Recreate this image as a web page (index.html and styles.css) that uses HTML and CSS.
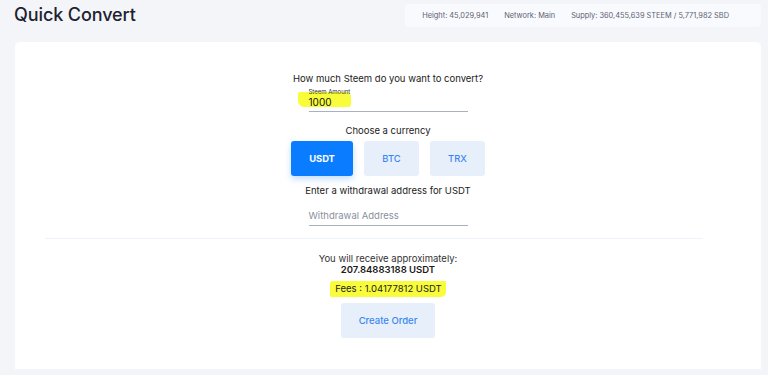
FILE: index.html
```html
<!DOCTYPE html>
<html lang="en">
<head>
<title>Quick Convert</title>
<meta charset="utf-8">
<link rel="stylesheet" href="styles.css">
</head>
<body>

<header class="top">
	<h1 class="title">Quick Convert</h1>
	<ul class="stats">
		<li>Height: 45,029,941</li>
		<li>Network: Main</li>
		<li>Supply: 360,455,639 STEEM / 5,771,982 SBD</li>
	</ul>
</header>

<main class="card">
	<section class="form">
		<p class="ask">How much Steem do you want to convert?</p>
		<label class="field amount">
			<span class="mark"></span>
			<span class="field-label">Steem Amount</span>
			<span class="field-value">1000</span>
		</label>

		<p class="ask choose">Choose a currency</p>
		<div class="coins">
			<button class="coin active">USDT</button>
			<button class="coin">BTC</button>
			<button class="coin">TRX</button>
		</div>

		<p class="ask withdraw">Enter a withdrawal address for USDT</p>
		<label class="field address">
			<span class="placeholder">Withdrawal Address</span>
		</label>
	</section>

	<hr class="divider">

	<section class="result">
		<p class="receive">You will receive approximately:</p>
		<p class="total">207.84883188 USDT</p>
		<p class="fees"><span class="mark-fees">Fees : 1.04177812 USDT</span></p>
		<button class="order">Create Order</button>
	</section>
</main>

<div class="next"></div>

</body>
</html>
```

FILE: styles.css
```css
html, body {
	margin: 0;
	padding: 0;
}

body {
	background: #f4f5f9;
	font-family: Inter, "Noto Sans", sans-serif;
	color: #212529;
	height: 375px;
	overflow: hidden;
}

p {
	margin: 0;
}

ul, li {
	margin: 0;
	padding: 0;
	list-style-type: none;
}

/* header */
.top {
	display: flex;
	justify-content: space-between;
	align-items: flex-start;
	padding: 4px 7px 0 14px;
	height: 38px;
}

.title {
	margin: 0;
	font-size: 18px;
	font-weight: 500;
	line-height: 22px;
	color: #1d2230;
	letter-spacing: -0.1px;
}

.stats {
	display: flex;
	gap: 16px;
	background: #f9fafd;
	border-radius: 4px;
	height: 23px;
	align-items: center;
	padding: 0 32px 0 17px;
	font-size: 7.4px;
	color: #5c6274;
}

/* card */
.card {
	background: #fff;
	border-radius: 5px 5px 0 0;
	margin: 0 7px 0 15px;
	height: 327px;
	padding-top: 1px;
	box-sizing: border-box;
}

.form, .result {
	display: flex;
	flex-direction: column;
	align-items: center;
}

.ask {
	font-size: 9.5px;
	line-height: 12px;
	color: #222;
}

.form .ask:first-child {
	margin-top: 30px;
}

.field {
	position: relative;
	display: block;
	width: 159px;
	border-bottom: 1px solid #a9b1bf;
}

.amount {
	height: 26px;
}

.field-label {
	position: absolute;
	left: 0;
	top: 3px;
	font-size: 6px;
	line-height: 7px;
	color: #333;
}

.field-value {
	position: absolute;
	left: 0;
	top: 11px;
	font-size: 10px;
	line-height: 12px;
	color: #111;
}

.mark {
	position: absolute;
	left: -11px;
	top: 7px;
	width: 53px;
	height: 15px;
	background: #f8fc3a;
	border-radius: 2px 5px 3px 6px;
}

.choose {
	margin-top: 13px;
}

.coins {
	display: flex;
	gap: 11px;
	margin-top: 4px;
}

.coin {
	border: 0;
	border-radius: 3px;
	height: 35px;
	padding: 0;
	width: 55px;
	font-family: inherit;
	font-size: 9.4px;
	font-weight: 500;
	background: #e7f0fa;
	color: #3a86f2;
}

.coin.active {
	width: 62px;
	background: #0a7cff;
	color: #fff;
	font-weight: 700;
	box-shadow: 0 3px 6px rgba(10, 124, 255, 0.25);
}

.withdraw {
	margin-top: 9px;
}

.address {
	height: 28px;
}

.placeholder {
	position: absolute;
	left: 0;
	top: 13px;
	font-size: 9.5px;
	line-height: 12px;
	color: #8a8f9c;
}

.divider {
	border: 0;
	border-top: 1px solid #eef2fb;
	margin: 12px 58px 0 30px;
}

.receive {
	margin-top: 14px;
	font-size: 9.5px;
	line-height: 11px;
	color: #333;
}

.total {
	font-size: 9.5px;
	line-height: 11px;
	font-weight: 600;
	color: #1a1a1a;
}

.fees {
	margin-top: 6px;
	font-size: 9.5px;
	line-height: 16px;
	color: #222;
}

.mark-fees {
	display: inline-block;
	background: #f8fc3a;
	padding: 0 4px 0 5px;
	border-radius: 3px 1px 5px 2px;
}

.order {
	margin-top: 6px;
	width: 94px;
	height: 35px;
	border: 0;
	border-radius: 3px;
	background: #e7f0fa;
	color: #3a86f2;
	font-family: inherit;
	font-size: 9.5px;
	font-weight: 500;
}

.next {
	margin: 1px 7px 0 15px;
	height: 3px;
	background: #f1f5fd;
}
```
